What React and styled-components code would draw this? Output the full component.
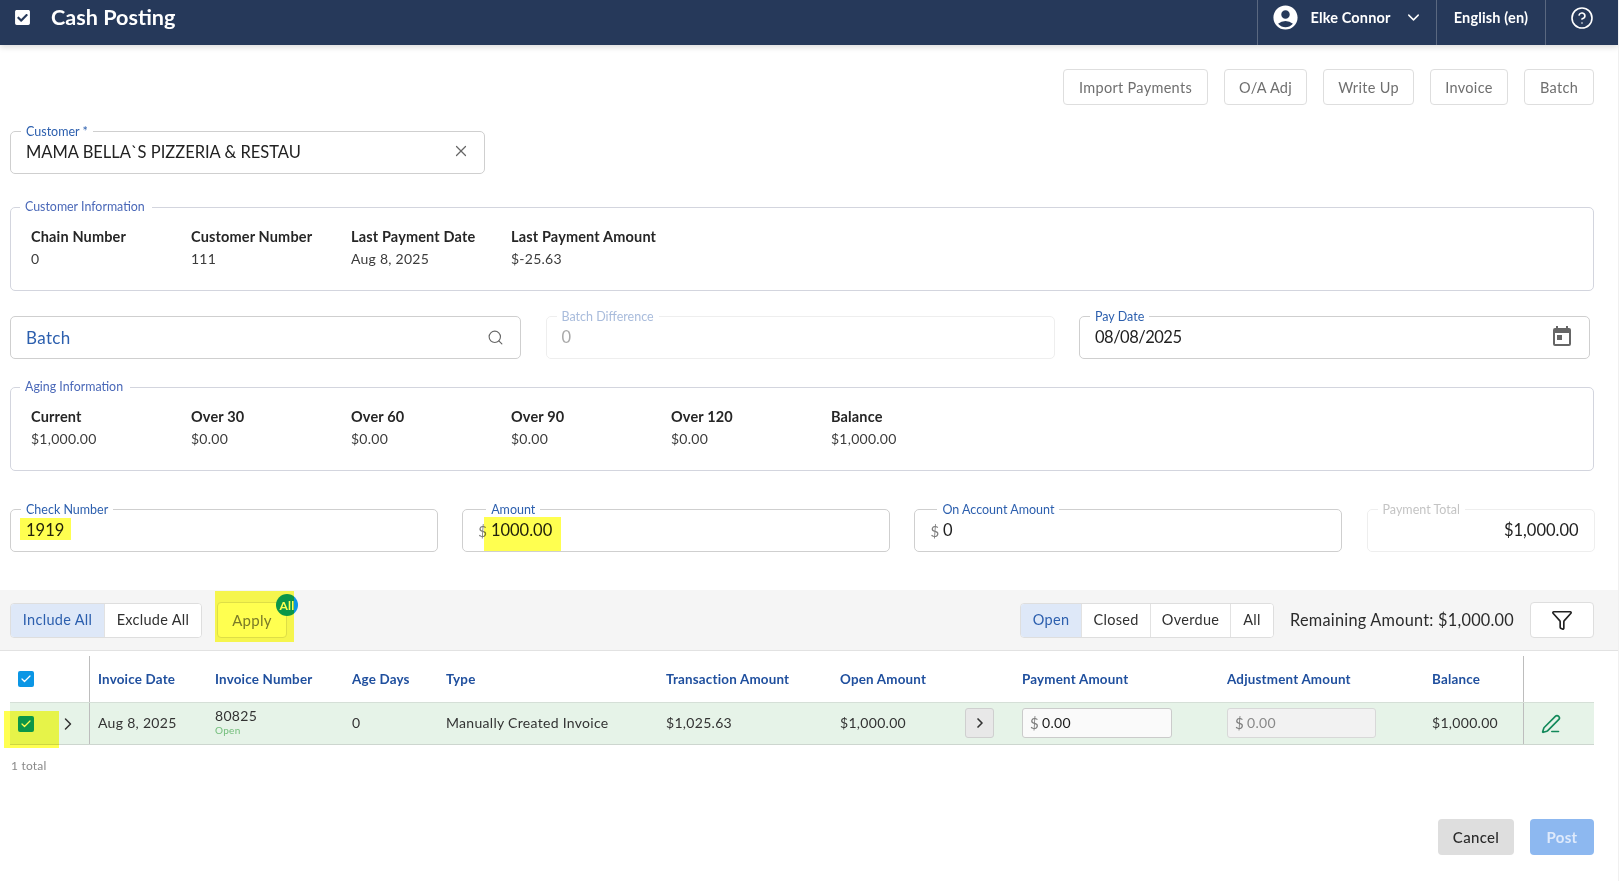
import React from "react";
import styled, { createGlobalStyle } from "styled-components";
import { FaCheckSquare } from "react-icons/fa";
import { MdAccountCircle } from "react-icons/md";
import { Check, ChevronDown, ChevronRight, CircleHelp, Funnel, PenLine, Search, X } from "lucide-react";

const GlobalStyle = createGlobalStyle`
  html, body {
    margin: 0;
    background: #fff;
    font-family: Lato, "Open Sans", sans-serif;
    color: #2b2b2b;
  }
  * {
    box-sizing: border-box;
  }
`;

const Page = styled.div`
  width: 1619px;
  height: 881px;
  overflow: hidden;
  position: relative;
  border-right: 1px solid #f0f0f0;
`;

const Header = styled.header`
  height: 45px;
  background: #26395a;
  color: #fff;
  display: flex;
  align-items: stretch;
  box-shadow: 0 2px 6px rgba(0, 0, 0, 0.15);
`;

const Brand = styled.div`
  flex: 1;
  display: flex;
  align-items: center;
  gap: 20px;
  padding: 0 0 11px 14px;
  font-size: 21.6px;
  font-weight: 700;
`;

const HeaderCell = styled.div`
  width: ${(p) => p.$width}px;
  border-left: 1px solid #5a6880;
  display: flex;
  align-items: center;
  justify-content: center;
  gap: ${(p) => p.$gap || 0}px;
  padding-bottom: 10px;
  font-size: 14.5px;
  font-weight: 700;
  letter-spacing: 0.15px;
`;

const Actions = styled.div`
  display: flex;
  justify-content: flex-end;
  gap: 16px;
  margin: 24px 24px 0 0;
`;

const OutlineButton = styled.button`
  height: 36px;
  width: ${(p) => p.$width}px;
  padding: 0;
  background: #fff;
  border: 1px solid #dedede;
  border-radius: 4px;
  color: #6f6f6f;
  font: 400 14.5px Lato, sans-serif;
  letter-spacing: 0.3px;
`;

const Field = styled.fieldset`
  margin: 0;
  min-width: 0;
  height: 51px;
  padding: 0 15px 7px;
  border: 1px solid ${(p) => (p.$muted ? "#eeeeee" : "#cfcfcf")};
  border-radius: 5px;
  display: flex;
  align-items: center;
  gap: 4px;
  font-size: 16.5px;
  color: ${(p) => (p.$muted ? "#a9a9a9" : "#222")};
`;

const FieldLegend = styled.legend`
  padding: 2px 5px 0;
  margin-left: ${(p) => (p.$indent ? p.$indent : -5)}px;
  font-size: 12.5px;
  line-height: 14px;
  color: ${(p) => (p.$faded ? "#c4c4c4" : p.$muted ? "#a9bcdc" : "#2c5fae")};
`;

const FieldValue = styled.span`
  flex: 1;
  letter-spacing: ${(p) => p.$spacing || 0}px;
  margin-top: -1px;
  text-align: ${(p) => p.$align || "left"};
  color: ${(p) => p.$color || "inherit"};
`;

const Dollar = styled.span`
  color: #7d7d7d;
  font-size: 15px;
`;

const CustomerField = styled(Field)`
  width: 475px;
  margin: 18px 0 0 10px;
`;

const InfoBox = styled.fieldset`
  margin: ${(p) => p.$top}px 24px 0 10px;
  height: 91px;
  padding: 15px 0 0 20px;
  border: 1px solid #d3d5de;
  border-radius: 5px;
  display: flex;
  align-items: flex-start;
`;

const InfoLegend = styled.legend`
  padding: 0 7px 0 5px;
  margin-left: -11px;
  font-size: 12.4px;
  line-height: 14px;
  color: #4a68b8;
`;

const InfoItem = styled.div`
  width: 160px;
  display: flex;
  flex-direction: column;
  gap: 6px;
  font-size: 14.5px;
  line-height: 16px;
`;

const InfoTitle = styled.div`
  font-weight: 700;
  color: #262626;
  letter-spacing: 0.15px;
`;

const InfoValue = styled.div`
  font-size: 14px;
  color: #3c3c3c;
  letter-spacing: 0.25px;
`;

const BatchRow = styled.div`
  display: grid;
  grid-template-columns: 511px 509px 511px;
  column-gap: 24.5px;
  align-items: end;
  margin: 17px 0 0 10px;
  width: 1580px;
`;

const BatchSearch = styled.div`
  height: 43px;
  border: 1px solid #cfcfcf;
  border-radius: 5px;
  display: flex;
  align-items: center;
  justify-content: space-between;
  padding: 0 16px 0 15px;
  font-size: 17px;
  letter-spacing: 0.35px;
  color: #2c5fae;
`;

const AmountRow = styled.div`
  display: grid;
  grid-template-columns: 428px 428px 428px 228px;
  column-gap: 24.2px;
  margin: 30px 24px 0 10px;
`;

const Toolbar = styled.div`
  height: 61px;
  margin-top: 38px;
  padding: 0 24px 0 10px;
  background: #f5f5f5;
  border-bottom: 1px solid #e2e2e2;
  display: flex;
  align-items: center;
`;

const Segments = styled.div`
  display: flex;
  height: 35px;
  border: 1px solid #dedede;
  border-radius: 4px;
  overflow: hidden;
  background: #fff;
`;

const Segment = styled.div`
  width: ${(p) => p.$width}px;
  display: flex;
  align-items: center;
  justify-content: center;
  padding-bottom: 2px;
  font-size: 14.5px;
  letter-spacing: 0.3px;
  color: ${(p) => (p.$active ? "#2c5fae" : "#303030")};
  background: ${(p) => (p.$active ? "#dee8f8" : "#fff")};
  & + & {
    border-left: 1px solid #e2e2e2;
  }
`;

const ApplyButton = styled.div`
  position: relative;
  width: 70px;
  height: 36px;
  margin-left: 15px;
  background: #fff;
  border: 1px solid #dedede;
  border-radius: 4px;
  display: flex;
  align-items: center;
  justify-content: center;
  padding-bottom: 1px;
  font-size: 15px;
  letter-spacing: 0.3px;
  color: #7a7a7a;
`;

const Badge = styled.span`
  position: absolute;
  top: -9px;
  right: -12px;
  width: 22px;
  height: 22px;
  border-radius: 50%;
  background: #0b96e5;
  color: #fff;
  font-size: 12px;
  font-weight: 700;
  display: flex;
  align-items: center;
  justify-content: center;
`;

const Spacer = styled.div`
  flex: 1;
`;

const Remaining = styled.div`
  margin: 0 16px;
  padding-bottom: 2px;
  font-size: 16.3px;
  letter-spacing: 0.25px;
  color: #2b2b2b;
`;

const FilterButton = styled.div`
  width: 64px;
  height: 36px;
  background: #fff;
  border: 1px solid #dedede;
  border-radius: 4px;
  display: flex;
  align-items: center;
  justify-content: center;
`;

const columns = "79px 118px 137px 94px 220px 174px 125px 57px 205px 205px 99px 71px";

const TableWrap = styled.div`
  margin: 0 24px 0 10px;
`;

const HeadRow = styled.div`
  height: 51px;
  display: grid;
  grid-template-columns: ${columns};
  padding-top: 5px;
`;

const BodyRow = styled.div`
  height: 43px;
  display: grid;
  grid-template-columns: ${columns};
  background: #e6f3e8;
  border-top: 1px solid #d5dfd7;
  border-bottom: 1px solid #cdd6cf;
`;

const HeadCell = styled.div`
  display: flex;
  align-items: center;
  padding-left: 8px;
  font-size: 13.4px;
  font-weight: 700;
  letter-spacing: 0.2px;
  color: #1f4f9e;
  border-left: ${(p) => (p.$rule ? "1px solid #bdbdbd" : "0")};
`;

const Cell = styled.div`
  display: flex;
  align-items: center;
  padding: 0 0 2px 8px;
  font-size: 14px;
  letter-spacing: 0.3px;
  color: #333;
  border-left: ${(p) => (p.$rule ? "1px solid #bdbdbd" : "0")};
`;

const SelectCell = styled(Cell)`
  justify-content: space-between;
  padding: 0 11px 0 8px;
`;

const InvoiceCell = styled(Cell)`
  flex-direction: column;
  align-items: flex-start;
  justify-content: center;
  line-height: 16px;
  padding-bottom: 3px;
`;

const ActionCell = styled(Cell)`
  padding: 0 0 0 17px;
`;

const StatusText = styled.span`
  font-size: 10px;
  line-height: 13px;
  color: #72bd7a;
`;

const CheckBox = styled.span`
  width: 16px;
  height: 16px;
  border-radius: 2px;
  background: #0b96e5;
  color: #fff;
  display: inline-flex;
  align-items: center;
  justify-content: center;
`;

const SquareButton = styled.div`
  width: 29px;
  height: 30px;
  background: #e8e8e8;
  border: 1px solid #cfcfcf;
  border-radius: 3px;
  display: flex;
  align-items: center;
  justify-content: center;
`;

const MoneyInput = styled.div`
  width: ${(p) => (p.$disabled ? 149 : 150)}px;
  height: 30px;
  padding: 0 7px;
  background: ${(p) => (p.$disabled ? "#f2f2f2" : "#fafafa")};
  border: 1px solid ${(p) => (p.$disabled ? "#d8d8d8" : "#cbcbcb")};
  border-radius: 3px;
  display: flex;
  align-items: center;
  gap: 3px;
  font-size: 14px;
  color: ${(p) => (p.$disabled ? "#8a8a8a" : "#1c1c1c")};
`;

const TotalText = styled.div`
  margin: 13px 0 0 1px;
  font-size: 12px;
  letter-spacing: 0.2px;
  color: #8a8a8a;
`;

const Footer = styled.div`
  display: flex;
  justify-content: flex-end;
  gap: 16px;
  margin: 46px 24px 0 0;
`;

const FooterButton = styled.div`
  width: ${(p) => p.$width}px;
  height: 36px;
  border-radius: 4px;
  display: flex;
  align-items: center;
  justify-content: center;
  font-size: 15px;
  font-weight: ${(p) => (p.$primary ? 700 : 500)};
  letter-spacing: 0.3px;
  color: ${(p) => (p.$primary ? "#dfeafb" : "#2b2b2b")};
  background: ${(p) => (p.$primary ? "#8db8f0" : "#dedede")};
`;

// marker strokes somebody drew on the screenshot
const Marker = styled.div`
  position: absolute;
  left: ${(p) => p.$x}px;
  top: ${(p) => p.$y}px;
  width: ${(p) => p.$w}px;
  height: ${(p) => p.$h}px;
  background: #ffff50;
  mix-blend-mode: multiply;
  pointer-events: none;
`;

const customerInfo = [
  ["Chain Number", "0"],
  ["Customer Number", "111"],
  ["Last Payment Date", "Aug 8, 2025"],
  ["Last Payment Amount", "$-25.63"],
];

const agingInfo = [
  ["Current", "$1,000.00"],
  ["Over 30", "$0.00"],
  ["Over 60", "$0.00"],
  ["Over 90", "$0.00"],
  ["Over 120", "$0.00"],
  ["Balance", "$1,000.00"],
];

const tableHeads = [
  "Invoice Date",
  "Invoice Number",
  "Age Days",
  "Type",
  "Transaction Amount",
  "Open Amount",
  "",
  "Payment Amount",
  "Adjustment Amount",
  "Balance",
];

const CalendarIcon = () => (
  <svg width="18" height="20" viewBox="0 0 18 20" style={{ marginRight: 3, marginTop: -3 }}>
    <path
      fill="#666"
      fillRule="evenodd"
      d="M3 0h2v2h8V0h2v2h1a2 2 0 0 1 2 2v14a2 2 0 0 1-2 2H2a2 2 0 0 1-2-2V4a2 2 0 0 1 2-2h1V0zM2 7v11h14V7H2zm2 2h5v5H4V9z"
    />
  </svg>
);

const InfoItems = ({ items }) =>
  items.map(([title, value]) => (
    <InfoItem key={title}>
      <InfoTitle>{title}</InfoTitle>
      <InfoValue>{value}</InfoValue>
    </InfoItem>
  ));

const App = () => {
  return (
    <Page>
      <GlobalStyle />
      <Header>
        <Brand>
          <FaCheckSquare size={17} />
          Cash Posting
        </Brand>
        <HeaderCell $width={179} $gap={10}>
          <MdAccountCircle size={29} />
          Elke Connor
          <ChevronDown size={19} strokeWidth={1.8} style={{ marginLeft: 3 }} />
        </HeaderCell>
        <HeaderCell $width={109}>English (en)</HeaderCell>
        <HeaderCell $width={73}>
          <CircleHelp size={24} strokeWidth={1.6} />
        </HeaderCell>
      </Header>

      <Actions>
        <OutlineButton $width={145}>Import Payments</OutlineButton>
        <OutlineButton $width={83}>O/A Adj</OutlineButton>
        <OutlineButton $width={91}>Write Up</OutlineButton>
        <OutlineButton $width={78}>Invoice</OutlineButton>
        <OutlineButton $width={70}>Batch</OutlineButton>
      </Actions>

      <CustomerField>
        <FieldLegend>Customer *</FieldLegend>
        <FieldValue>MAMA BELLA`S PIZZERIA &amp; RESTAU</FieldValue>
        <X size={18} strokeWidth={1.6} color="#666" style={{ marginRight: -1, marginTop: -3 }} />
      </CustomerField>

      <InfoBox $top={26}>
        <InfoLegend>Customer Information</InfoLegend>
        <InfoItems items={customerInfo} />
      </InfoBox>

      <BatchRow>
        <BatchSearch>
          Batch
          <Search size={17} strokeWidth={1.6} color="#666" />
        </BatchSearch>
        <Field $muted>
          <FieldLegend $muted>Batch Difference</FieldLegend>
          <FieldValue>0</FieldValue>
        </Field>
        <Field>
          <FieldLegend>Pay Date</FieldLegend>
          <FieldValue $spacing={-0.5}>08/08/2025</FieldValue>
          <CalendarIcon />
        </Field>
      </BatchRow>

      <InfoBox $top={21}>
        <InfoLegend>Aging Information</InfoLegend>
        <InfoItems items={agingInfo} />
      </InfoBox>

      <AmountRow>
        <Field>
          <FieldLegend>Check Number</FieldLegend>
          <FieldValue>1919</FieldValue>
        </Field>
        <Field>
          <FieldLegend $indent={8}>Amount</FieldLegend>
          <Dollar>$</Dollar>
          <FieldValue>1000.00</FieldValue>
        </Field>
        <Field>
          <FieldLegend $indent={7}>On Account Amount</FieldLegend>
          <Dollar>$</Dollar>
          <FieldValue>0</FieldValue>
        </Field>
        <Field $muted>
          <FieldLegend $faded>Payment Total</FieldLegend>
          <FieldValue $align="right" $color="#222">$1,000.00</FieldValue>
        </Field>
      </AmountRow>

      <Toolbar>
        <Segments>
          <Segment $active $width={93}>Include All</Segment>
          <Segment $width={97}>Exclude All</Segment>
        </Segments>
        <ApplyButton>
          Apply
          <Badge>All</Badge>
        </ApplyButton>
        <Spacer />
        <Segments>
          <Segment $active $width={60}>Open</Segment>
          <Segment $width={69}>Closed</Segment>
          <Segment $width={80}>Overdue</Segment>
          <Segment $width={43}>All</Segment>
        </Segments>
        <Remaining>Remaining Amount: $1,000.00</Remaining>
        <FilterButton>
          <Funnel size={22} strokeWidth={1.8} color="#222" />
        </FilterButton>
      </Toolbar>

      <TableWrap>
        <HeadRow>
          <HeadCell>
            <CheckBox>
              <Check size={12} strokeWidth={2.5} />
            </CheckBox>
          </HeadCell>
          {tableHeads.map((title, i) => (
            <HeadCell key={title + i} $rule={i === 0}>{title}</HeadCell>
          ))}
          <HeadCell $rule />
        </HeadRow>
        <BodyRow>
          <SelectCell>
            <CheckBox>
              <Check size={12} strokeWidth={2.5} />
            </CheckBox>
            <ChevronRight size={20} strokeWidth={1.8} color="#333" />
          </SelectCell>
          <Cell $rule>Aug 8, 2025</Cell>
          <InvoiceCell>
            80825
            <StatusText>Open</StatusText>
          </InvoiceCell>
          <Cell>0</Cell>
          <Cell>Manually Created Invoice</Cell>
          <Cell>$1,025.63</Cell>
          <Cell>$1,000.00</Cell>
          <Cell>
            <SquareButton>
              <ChevronRight size={16} strokeWidth={2.5} color="#333" />
            </SquareButton>
          </Cell>
          <Cell>
            <MoneyInput>
              <Dollar>$</Dollar>
              0.00
            </MoneyInput>
          </Cell>
          <Cell>
            <MoneyInput $disabled>
              <Dollar>$</Dollar>
              0.00
            </MoneyInput>
          </Cell>
          <Cell>$1,000.00</Cell>
          <ActionCell $rule>
            <PenLine size={20} strokeWidth={2} color="#12895a" />
          </ActionCell>
        </BodyRow>
        <TotalText>1 total</TotalText>
      </TableWrap>

      <Footer>
        <FooterButton $width={76}>Cancel</FooterButton>
        <FooterButton $primary $width={64}>Post</FooterButton>
      </Footer>

      <Marker $x={20} $y={518} $w={51} $h={22} />
      <Marker $x={484} $y={517} $w={77} $h={34} />
      <Marker $x={215} $y={591} $w={79} $h={51} />
      <Marker $x={4} $y={711} $w={55} $h={37} />
    </Page>
  );
};

export default App;
